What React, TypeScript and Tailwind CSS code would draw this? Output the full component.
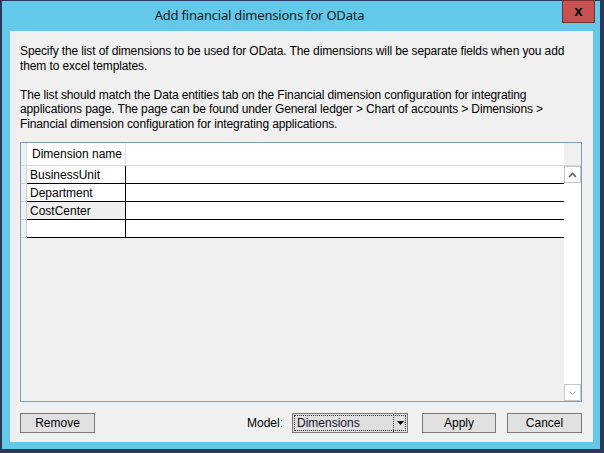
import { ReactNode } from "react";

const ui = { fontFamily: '"Liberation Sans", Arial, sans-serif' };

const rows = ["BusinessUnit", "Department", "CostCenter", ""];

function Button({ label, className }: { label: string; className?: string }) {
    return (
        <button className={`h-[20px] border border-[#7a7a7a] bg-[#e1e1e1] text-[12px] leading-none text-black ${className ?? "w-[75px]"}`}>
            {label}
        </button>
    );
}

function ScrollBox({ children }: { children: ReactNode }) {
    return (
        <div className="flex h-[17px] w-[17px] items-center justify-center border border-[#c8c8c8] bg-white">
            {children}
        </div>
    );
}

function DimensionGrid() {
    return (
        <div className="flex h-[260px] flex-col border border-[#7f9bbd] bg-[#f0f0f0]">
            {/* header */}
            <div className="flex h-[23px] border-b border-[#d9d9d9]">
                <div className="w-[6px] border-r border-[#e0e0e0] bg-[#f0f0f0]" />
                <div className="flex w-[99px] items-center border-r border-[#e4e4e4] bg-white pl-[5px] text-[12px] text-black">
                    Dimension name
                </div>
                <div className="flex-1 bg-white" />
                <div className="w-[17px] bg-[#f0f0f0]" />
            </div>
            <div className="flex flex-1">
                <div className="flex flex-1 flex-col">
                    {rows.map((r, i) => (
                        <div key={i} className="flex h-[18px]">
                            <div className="w-[6px] border-b border-r border-[#d0d0d0] bg-[#f0f0f0]" />
                            <div
                                className={`flex w-[99px] items-center border-b border-r border-black pl-[3px] text-[12px] text-black ${
                                    r === "CostCenter" ? "bg-[#efefef]" : "bg-white"
                                }`}
                            >
                                {r}
                            </div>
                            <div className="flex-1 border-b border-black bg-white" />
                        </div>
                    ))}
                </div>
                {/* vertical scrollbar */}
                <div className="flex w-[17px] flex-col justify-between bg-white">
                    <ScrollBox>
                        <svg width="9" height="6" viewBox="0 0 9 6">
                            <path d="M1 5 L4.5 1.5 L8 5" fill="none" stroke="#606060" strokeWidth="1.6" />
                        </svg>
                    </ScrollBox>
                    <ScrollBox>
                        <svg width="9" height="6" viewBox="0 0 9 6">
                            <path d="M1.5 1.5 L4.5 4.5 L7.5 1.5" fill="none" stroke="#a0a0a0" strokeWidth="1" />
                        </svg>
                    </ScrollBox>
                </div>
            </div>
        </div>
    );
}

export default function App() {
    return (
        <div className="h-[453px] w-[604px] bg-[#2a3a56] pb-[4px] pl-[2px] pr-[4px] pt-[1px]" style={ui}>
            <div className="relative flex h-full flex-col bg-[#64c8ea] pb-[7px] pl-[8px] pr-[7px]">
                {/* title bar */}
                <div className="flex h-[30px] items-center justify-center pr-[84px] text-[13px] tracking-[-0.2px] text-[#1b1b1b]" style={{ fontFamily: '"Noto Sans", "Open Sans", sans-serif' }}>
                    Add financial dimensions for OData
                </div>
                <button className="absolute right-[5px] top-[-1px] flex h-[23px] w-[33px] items-center justify-center border border-[#7a2f2f] bg-[#c75050] pb-[2px] text-[15px] font-bold leading-none text-black">
                    x
                </button>

                {/* client area */}
                <div className="flex flex-1 flex-col bg-[#f0f0f0] pb-[9px] pl-[10px] pr-[11px] pt-[13px] text-black">
                    <div className="whitespace-nowrap text-[12px] leading-[14.5px] tracking-[-0.12px]">
                        <p>Specify the list of dimensions to be used for OData. The dimensions will be separate fields when you add</p>
                        <p>them to excel templates.</p>
                        <p>&nbsp;</p>
                        <p>The list should match the Data entities tab on the Financial dimension configuration for integrating</p>
                        <p>applications page. The page can be found under General ledger &gt; Chart of accounts &gt; Dimensions &gt;</p>
                        <p>Financial dimension configuration for integrating applications.</p>
                    </div>

                    <div className="mt-[11px]">
                        <DimensionGrid />
                    </div>

                    <div className="mt-[11px] flex items-center">
                        <Button label="Remove" />
                        <div className="flex-1" />
                        <span className="mr-[9px] text-[12px]">Model:</span>
                        <div className="relative flex h-[20px] w-[116px] items-center border border-[#7a7a7a] bg-[#e0e0e0]">
                            <div className="absolute inset-[1px] border border-dotted border-[#333]" />
                            <span className="flex-1 pl-[4px] text-[12px] text-[#101030]">Dimensions</span>
                            <div className="flex h-full w-[14px] items-center justify-center border-l border-dotted border-[#333]">
                                <svg width="7" height="4" viewBox="0 0 7 4">
                                    <path d="M0 0 H7 L3.5 4 Z" fill="#000" />
                                </svg>
                            </div>
                        </div>
                        <Button label="Apply" className="ml-[14px] w-[74px]" />
                        <Button label="Cancel" className="ml-[11px] w-[75px]" />
                    </div>
                </div>
            </div>
        </div>
    );
}
